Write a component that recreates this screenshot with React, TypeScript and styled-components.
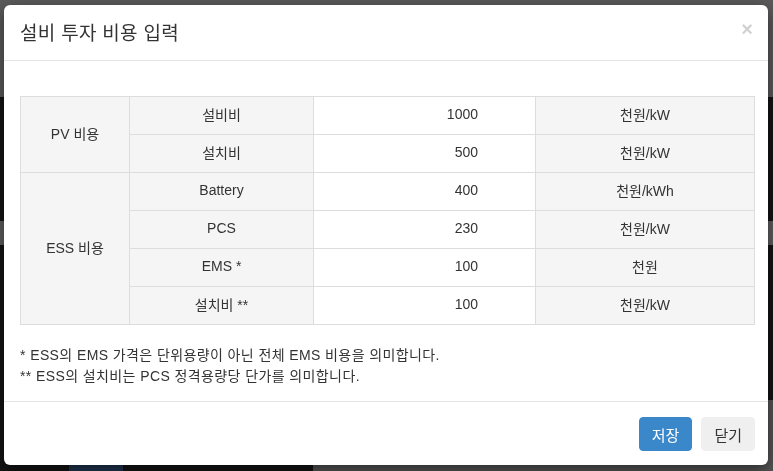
import React from "react"
import styled, { createGlobalStyle } from "styled-components"

const GlobalStyle = createGlobalStyle`
  html, body {
    margin: 0;
    padding: 0;
    background: #141414;
    font-family: "Liberation Sans", "Noto Sans CJK KR", sans-serif;
    color: #333;
  }
  * { box-sizing: border-box; }
`

// the page that sits behind the dimmed backdrop
const Page = styled.div`
  width: 773px;
  height: 471px;
  display: flex;
  flex-direction: column;
  overflow: hidden;
`

const PageBand = styled.div<{ $h: number; $bg: string }>`
  height: ${(p) => p.$h}px;
  background: ${(p) => p.$bg};
  flex-shrink: 0;
`

const PageFoot = styled.div`
  flex: 1;
  display: flex;
  background: #141414;
`

const FootBlock = styled.div<{ $w: number; $bg: string }>`
  width: ${(p) => p.$w}px;
  background: ${(p) => p.$bg};
`

const Overlay = styled.div`
  position: fixed;
  inset: 0;
  padding: 5px 5px 0 4px;
`

const Modal = styled.div`
  width: 764px;
  height: 460px;
  background: #fff;
  border-radius: 6px;
  box-shadow: 0 5px 15px rgba(0, 0, 0, 0.5);
  display: flex;
  flex-direction: column;
`

const Header = styled.div`
  display: flex;
  align-items: center;
  justify-content: space-between;
  height: 56px;
  padding: 0 15px 2px 16px;
  border-bottom: 1px solid #e5e5e5;
`

const Title = styled.h4`
  margin: 0;
  font-size: 19px;
  font-weight: normal;
  letter-spacing: 0.3px;
  color: #333;
`

const Close = styled.button`
  border: none;
  background: none;
  padding: 0;
  font-family: "Liberation Sans", sans-serif;
  font-size: 20px;
  font-weight: bold;
  line-height: 1;
  color: #000;
  opacity: 0.18;
  margin-top: -6px;
  cursor: pointer;
`

const Body = styled.div`
  flex: 1;
  padding: 35px 13px 0 16px;
`

const Table = styled.table`
  width: 735px;
  border-collapse: collapse;
  font-size: 14px;
  color: #333;
`

const Cell = styled.td<{ $value?: boolean; $w?: number }>`
  height: 38px;
  border: 1px solid #ddd;
  padding: 0 ${(p) => (p.$value ? "57px" : "8px")} 3px 8px;
  text-align: ${(p) => (p.$value ? "right" : "center")};
  background: ${(p) => (p.$value ? "#fff" : "#f5f5f5")};
  width: ${(p) => (p.$w ? `${p.$w}px` : "auto")};
`

const Notes = styled.div`
  margin-top: 20px;
  font-size: 14px;
  letter-spacing: 0.4px;
  line-height: 21px;
  color: #333;
`

const Footer = styled.div`
  display: flex;
  justify-content: flex-end;
  gap: 9px;
  height: 64px;
  padding: 15px 13px 0 0;
  border-top: 1px solid #e5e5e5;
`

const Button = styled.button<{ $primary?: boolean }>`
  height: 34px;
  padding: 0 12px;
  border: 1px solid ${(p) => (p.$primary ? "#3a87c9" : "#efefef")};
  border-radius: 4px;
  background: ${(p) => (p.$primary ? "#3a87c9" : "#efefef")};
  color: ${(p) => (p.$primary ? "#fff" : "#333")};
  font-family: "Liberation Sans", "Noto Sans CJK KR", sans-serif;
  font-size: 15px;
  cursor: pointer;
`

const rows = [
  { group: "PV 비용", span: 2, label: "설비비", value: "1000", unit: "천원/kW" },
  { label: "설치비", value: "500", unit: "천원/kW" },
  { group: "ESS 비용", span: 4, label: "Battery", value: "400", unit: "천원/kWh" },
  { label: "PCS", value: "230", unit: "천원/kW" },
  { label: "EMS *", value: "100", unit: "천원" },
  { label: "설치비 **", value: "100", unit: "천원/kW" },
]

export default function App() {
  return (
    <>
      <GlobalStyle />
      <Page>
        <PageBand $h={97} $bg="#5a5a5a" />
        <PageBand $h={124} $bg="#141414" />
        <PageBand $h={24} $bg="#5e5e5e" />
        <PageBand $h={155} $bg="#141414" />
        <PageFoot>
          <FootBlock $w={69} $bg="#141414" />
          <FootBlock $w={54} $bg="#1f3550" />
          <FootBlock $w={190} $bg="#141414" />
          <FootBlock $w={460} $bg="#555" />
        </PageFoot>
      </Page>
      <Overlay>
        <Modal>
          <Header>
            <Title>설비 투자 비용 입력</Title>
            <Close>×</Close>
          </Header>
          <Body>
            <Table>
              <tbody>
                {rows.map((r, i) => (
                  <tr key={i}>
                    {r.group && (
                      <Cell rowSpan={r.span} $w={109}>
                        {r.group}
                      </Cell>
                    )}
                    <Cell $w={184}>{r.label}</Cell>
                    <Cell $value $w={222}>
                      {r.value}
                    </Cell>
                    <Cell>{r.unit}</Cell>
                  </tr>
                ))}
              </tbody>
            </Table>
            <Notes>
              <div>* ESS의 EMS 가격은 단위용량이 아닌 전체 EMS 비용을 의미합니다.</div>
              <div>** ESS의 설치비는 PCS 정격용량당 단가를 의미합니다.</div>
            </Notes>
          </Body>
          <Footer>
            <Button $primary>저장</Button>
            <Button>닫기</Button>
          </Footer>
        </Modal>
      </Overlay>
    </>
  )
}
